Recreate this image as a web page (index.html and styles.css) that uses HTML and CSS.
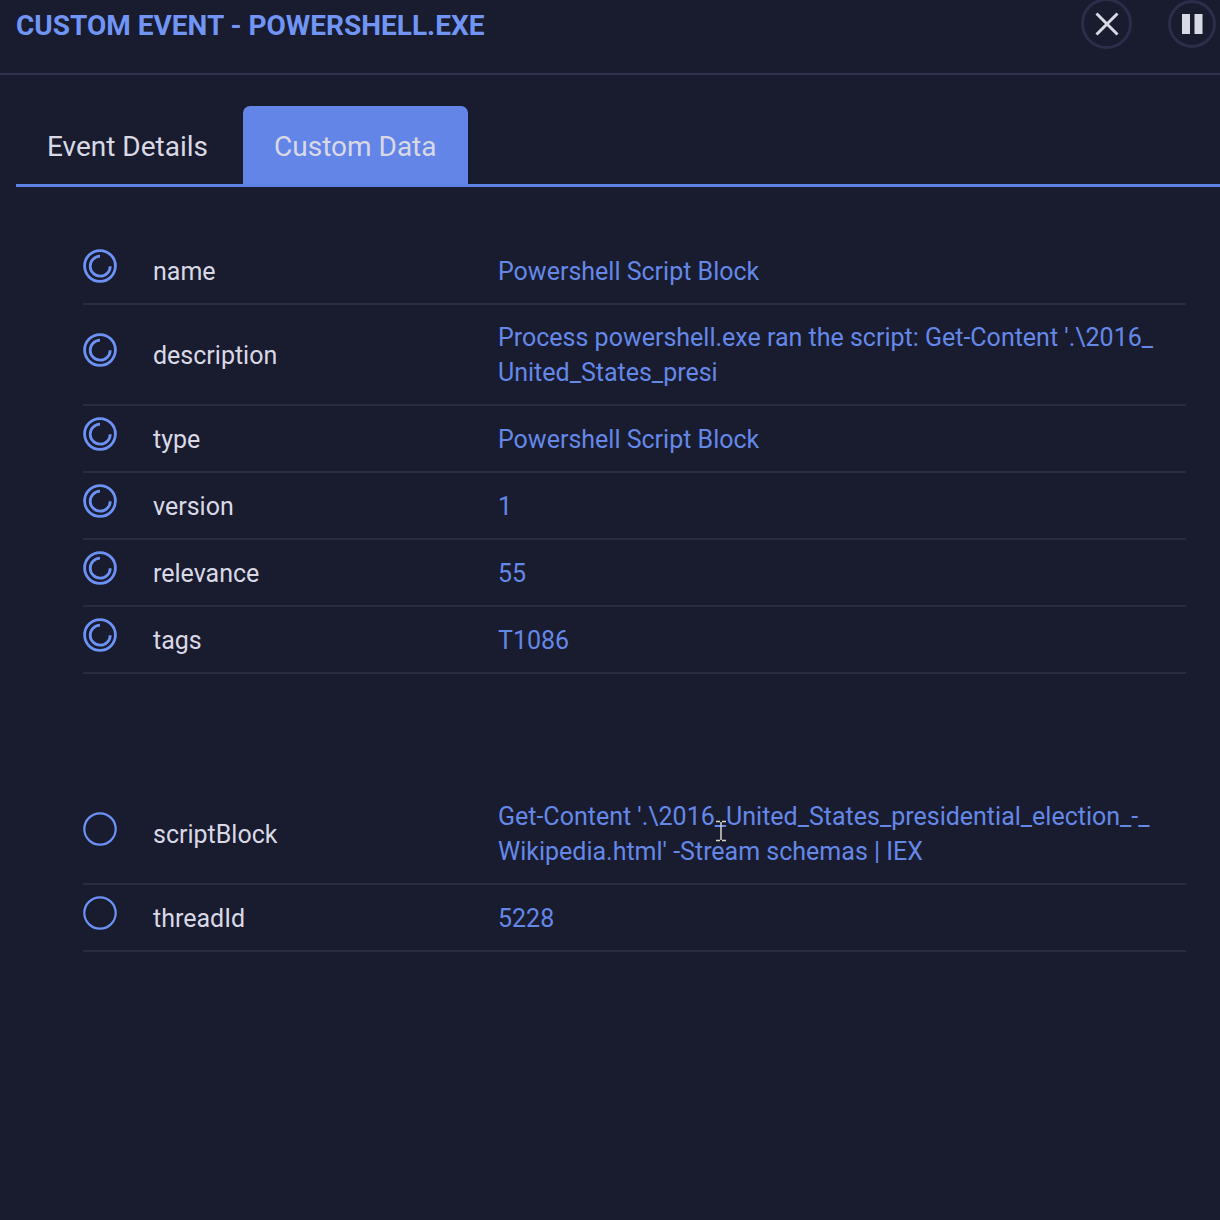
FILE: index.html
```html
<!DOCTYPE html>
<html lang="en">
<head>
    <meta charset="UTF-8">
    <meta name="viewport" content="width=device-width, initial-scale=1.0">
    <title>Custom Event - powershell.exe</title>
    <link rel="stylesheet" href="styles.css">
</head>
<body>
    <!-- shared icons -->
    <svg class="sprite" aria-hidden="true">
        <symbol id="ring" viewBox="0 0 34 34">
            <circle cx="17" cy="17" r="15.400" fill="none" stroke="currentColor" stroke-width="2.800"/>
            <path d="M17 7.200a10 10 0 1 0 10.200 10" fill="none" stroke="currentColor" stroke-width="2.800"/>
        </symbol>
        <symbol id="circle" viewBox="0 0 34 34">
            <circle cx="17" cy="17" r="15.700" fill="none" stroke="currentColor" stroke-width="2.200"/>
        </symbol>
    </svg>

    <header class="header">
        <h1>CUSTOM EVENT - POWERSHELL.EXE</h1>
        <button class="round-btn" aria-label="Close">
            <svg width="24" height="24" viewBox="0 0 24 24"><path d="M1.500 1.500l21 21M22.500 1.500l-21 21" stroke="currentColor" stroke-width="3"/></svg>
        </button>
        <button class="round-btn small" aria-label="Pause">
            <svg width="22" height="22" viewBox="0 0 22 22"><path d="M1 1h8v20H1zM13.500 1h8v20h-8z" fill="currentColor"/></svg>
        </button>
    </header>

    <nav class="tabs">
        <button class="tab">Event Details</button>
        <button class="tab active">Custom Data</button>
    </nav>

    <main class="content">
        <table>
            <tr>
                <td class="icon"><svg><use href="#ring"/></svg></td>
                <th scope="row">name</th>
                <td>Powershell Script Block</td>
            </tr>
            <tr>
                <td class="icon"><svg><use href="#ring"/></svg></td>
                <th scope="row">description</th>
                <td>Process powershell.exe ran the script: Get-Content '.\2016_<wbr>United_States_presi</td>
            </tr>
            <tr>
                <td class="icon"><svg><use href="#ring"/></svg></td>
                <th scope="row">type</th>
                <td>Powershell Script Block</td>
            </tr>
            <tr>
                <td class="icon"><svg><use href="#ring"/></svg></td>
                <th scope="row">version</th>
                <td>1</td>
            </tr>
            <tr>
                <td class="icon"><svg><use href="#ring"/></svg></td>
                <th scope="row">relevance</th>
                <td>55</td>
            </tr>
            <tr>
                <td class="icon"><svg><use href="#ring"/></svg></td>
                <th scope="row">tags</th>
                <td>T1086</td>
            </tr>
        </table>

        <table>
            <tr>
                <td class="icon"><svg><use href="#circle"/></svg></td>
                <th scope="row">scriptBlock</th>
                <td>Get-Content '.\2016<span class="caret-spot">_<svg class="cursor" viewBox="0 0 10 22"><path d="M0 1.500h4M6 1.500h4M5 2v18M0 20.500h4M6 20.500h4" fill="none" stroke="currentColor" stroke-width="1.500"/></svg></span>United_States_presidential_election_-_<wbr>Wikipedia.html' -Stream schemas | IEX</td>
            </tr>
            <tr>
                <td class="icon"><svg><use href="#circle"/></svg></td>
                <th scope="row">threadId</th>
                <td>5228</td>
            </tr>
        </table>
    </main>
</body>
</html>
```
FILE: styles.css
```css
* {
    box-sizing: border-box;
}
body {
    margin: 0;
    min-height: 100vh;
    background-color: #191b2e;
    color: #d9d9e6;
    font-family: Roboto, sans-serif;
    font-size: 25px;
    line-height: 35px;
}
.sprite {
    display: none;
}
.header {
    display: flex;
    align-items: center;
    gap: 36px;
    height: 75px;
    padding: 0 4px 26px 16px;
    border-bottom: 2px solid #2f3150;
}
h1 {
    flex: 1;
    margin: 0;
    padding-top: 3px;
    color: #7095f5;
    font-size: 28px;
    font-weight: bold;
}
button {
    border: none;
    background: none;
    color: inherit;
    font-family: inherit;
    cursor: pointer;
}
.round-btn {
    display: flex;
    align-items: center;
    justify-content: center;
    width: 51px;
    height: 51px;
    padding: 0;
    border: 3px solid #2c2d4a;
    border-radius: 50%;
}
.round-btn.small {
    width: 48px;
    height: 48px;
}
.tabs {
    display: flex;
    gap: 4px;
    margin: 31px 0 0 16px;
    border-bottom: 3px solid #5e82e4;
}
.tab {
    height: 78px;
    padding: 3px 31px 0;
    border-radius: 7px 7px 0 0;
    font-size: 28px;
}
.tab.active {
    background-color: #6385e8;
}
.content {
    margin: 51px 34px 0 83px;
}
table {
    width: 100%;
    margin-bottom: 110px;
    border-collapse: separate;
    border-spacing: 0;
    table-layout: fixed;
}
tr {
    height: 67px;
}
th, td {
    padding: 15px 0 14px;
    border-bottom: 2px solid #292b40;
    text-align: left;
    vertical-align: middle;
}
th {
    width: 345px;
    font-weight: normal;
}
td {
    color: #6488e8;
}
.icon {
    width: 70px;
    padding: 4px 0 13px;
    color: #6d92f5;
}
.icon svg {
    display: block;
    width: 34px;
    height: 34px;
}
.caret-spot {
    position: relative;
}
.cursor {
    position: absolute;
    top: 18px;
    left: 1px;
    width: 10px;
    height: 22px;
    color: #d8d6c8;
}
```
